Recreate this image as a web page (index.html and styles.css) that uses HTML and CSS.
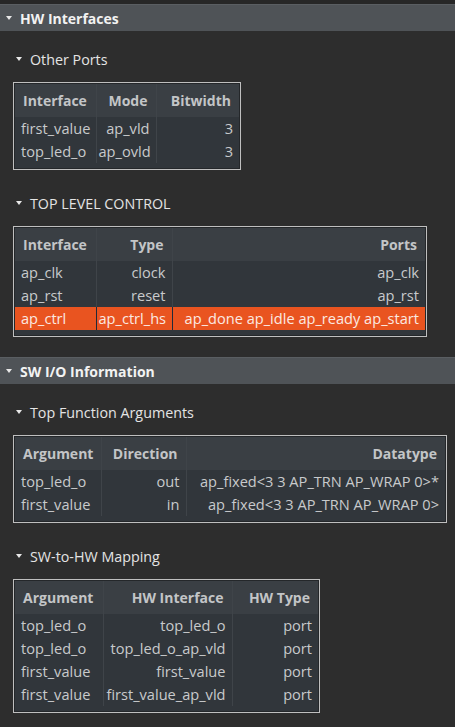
FILE: index.html
```html
<!DOCTYPE html>
<html>
<head>
<meta charset="utf-8">
<link rel="stylesheet" href="styles.css">
</head>
<body>
<div class="panel">
  <div class="section-head"><span class="tri"></span><span>HW Interfaces</span></div>

  <div class="sub">
    <div class="sub-title"><span class="tri"></span><span>Other Ports</span></div>
    <div class="tbl-wrap">
      <table class="tbl t1">
        <colgroup><col class="c81"><col class="c60"><col class="c83"></colgroup>
        <thead><tr><th class="l">Interface</th><th class="r">Mode</th><th class="r">Bitwidth</th></tr></thead>
        <tbody>
          <tr><td class="l">first_value</td><td class="r">ap_vld</td><td class="r">3</td></tr>
          <tr><td class="l">top_led_o</td><td class="r">ap_ovld</td><td class="r">3</td></tr>
        </tbody>
      </table>
    </div>
  </div>

  <div class="sub">
    <div class="sub-title"><span class="tri"></span><span>TOP LEVEL CONTROL</span></div>
    <div class="tbl-wrap">
      <table class="tbl t2">
        <colgroup><col class="c81"><col class="c76"><col class="c253"></colgroup>
        <thead><tr><th class="l">Interface</th><th class="r">Type</th><th class="r">Ports</th></tr></thead>
        <tbody>
          <tr><td class="l">ap_clk</td><td class="r">clock</td><td class="r">ap_clk</td></tr>
          <tr><td class="l">ap_rst</td><td class="r">reset</td><td class="r">ap_rst</td></tr>
          <tr class="sel"><td class="l">ap_ctrl</td><td class="r">ap_ctrl_hs</td><td class="r">ap_done ap_idle ap_ready ap_start</td></tr>
        </tbody>
      </table>
    </div>
  </div>

  <div class="section-head second"><span class="tri"></span><span>SW I/O Information</span></div>

  <div class="sub">
    <div class="sub-title"><span class="tri"></span><span>Top Function Arguments</span></div>
    <div class="tbl-wrap">
      <table class="tbl t3">
        <colgroup><col class="c86"><col class="c85"><col class="c259"></colgroup>
        <thead><tr><th class="l">Argument</th><th class="r">Direction</th><th class="r">Datatype</th></tr></thead>
        <tbody>
          <tr><td class="l">top_led_o</td><td class="r">out</td><td class="r">ap_fixed&lt;3 3 AP_TRN AP_WRAP 0&gt;*</td></tr>
          <tr><td class="l">first_value</td><td class="r">in</td><td class="r">ap_fixed&lt;3 3 AP_TRN AP_WRAP 0&gt;</td></tr>
        </tbody>
      </table>
    </div>
  </div>

  <div class="sub">
    <div class="sub-title"><span class="tri"></span><span>SW-to-HW Mapping</span></div>
    <div class="tbl-wrap">
      <table class="tbl t4">
        <colgroup><col class="c88"><col class="c129"><col class="c86"></colgroup>
        <thead><tr><th class="l">Argument</th><th class="r">HW Interface</th><th class="r">HW Type</th></tr></thead>
        <tbody>
          <tr><td class="l">top_led_o</td><td class="r">top_led_o</td><td class="r">port</td></tr>
          <tr><td class="l">top_led_o</td><td class="r">top_led_o_ap_vld</td><td class="r">port</td></tr>
          <tr><td class="l">first_value</td><td class="r">first_value</td><td class="r">port</td></tr>
          <tr><td class="l">first_value</td><td class="r">first_value_ap_vld</td><td class="r">port</td></tr>
        </tbody>
      </table>
    </div>
  </div>
</div>
</body>
</html>
```

FILE: styles.css
```css
html, body {
  margin: 0;
  padding: 0;
  background: #2d2d2d;
}
body {
  width: 455px;
  height: 727px;
  overflow: hidden;
  font-family: "Open Sans", "Noto Sans", sans-serif;
  font-size: 14.6px;
  color: #c8cacc;
}
.panel {
  border-top: 4px solid #272727;
  display: flex;
  flex-direction: column;
}
.section-head {
  height: 27px;
  background: #4f5357;
  border-top: 1px solid #5a5e62;
  box-sizing: border-box;
  display: flex;
  align-items: center;
  padding-left: 6px;
  gap: 8px;
  font-weight: bold;
  font-size: 14px;
  color: #f2f2f2;
}
.section-head.second {
  margin-top: 20px;
}
.tri {
  width: 0;
  height: 0;
  border-left: 3.5px solid transparent;
  border-right: 3.5px solid transparent;
  border-top: 4px solid #e8e8e8;
  flex: none;
}
.sub {
  padding-left: 13px;
  display: flex;
  flex-direction: column;
  align-items: flex-start;
}
.sub-title {
  height: 20px;
  margin-top: 18px;
  margin-left: 3px;
  display: flex;
  align-items: center;
  gap: 8px;
  font-size: 14.3px;
  color: #e4e4e4;
}
.sub + .sub .sub-title {
  margin-top: 23px;
}
.tbl-wrap {
  margin-top: 13px;
  border: 1px solid #bfbfbf;
  box-shadow: inset 0 0 0 1px #24272a;
  padding: 1px 1px 6px 1px;
  background: #31363b;
}
.tbl {
  border-collapse: collapse;
  table-layout: fixed;
}
.t1 { width: 224px; }
.t2 { width: 410px; }
.t3 { width: 430px; }
.t4 { width: 303px; }
.tbl th, .tbl td {
  white-space: nowrap;
  border-right: 1px solid #3f4449;
  box-sizing: border-box;
}
.tbl th:last-child, .tbl td:last-child {
  border-right: none;
}
.tbl th {
  height: 33px;
  background: #3a3f44;
  font-weight: bold;
  font-size: 14px;
  color: #c3c5c7;
}
.tbl th.l { padding: 0 2px 0 8px; }
.tbl th.r { padding: 0 8px 0 2px; }
.tbl td {
  height: 23px;
  line-height: 23px;
}
.tbl td.l { padding: 0 2px 0 6px; }
.tbl td.r { padding: 0 6px 0 2px; }
.l { text-align: left; }
.r { text-align: right; }
.tbl tr.sel td {
  background: #e95420;
  color: #fbe9e2;
  border-right-color: #1f2a3a;
}
.c81 { width: 81px; }
.c60 { width: 60px; }
.c83 { width: 83px; }
.c76 { width: 76px; }
.c253 { width: 253px; }
.c86 { width: 86px; }
.c85 { width: 85px; }
.c259 { width: 259px; }
.c88 { width: 88px; }
.c129 { width: 129px; }
```
